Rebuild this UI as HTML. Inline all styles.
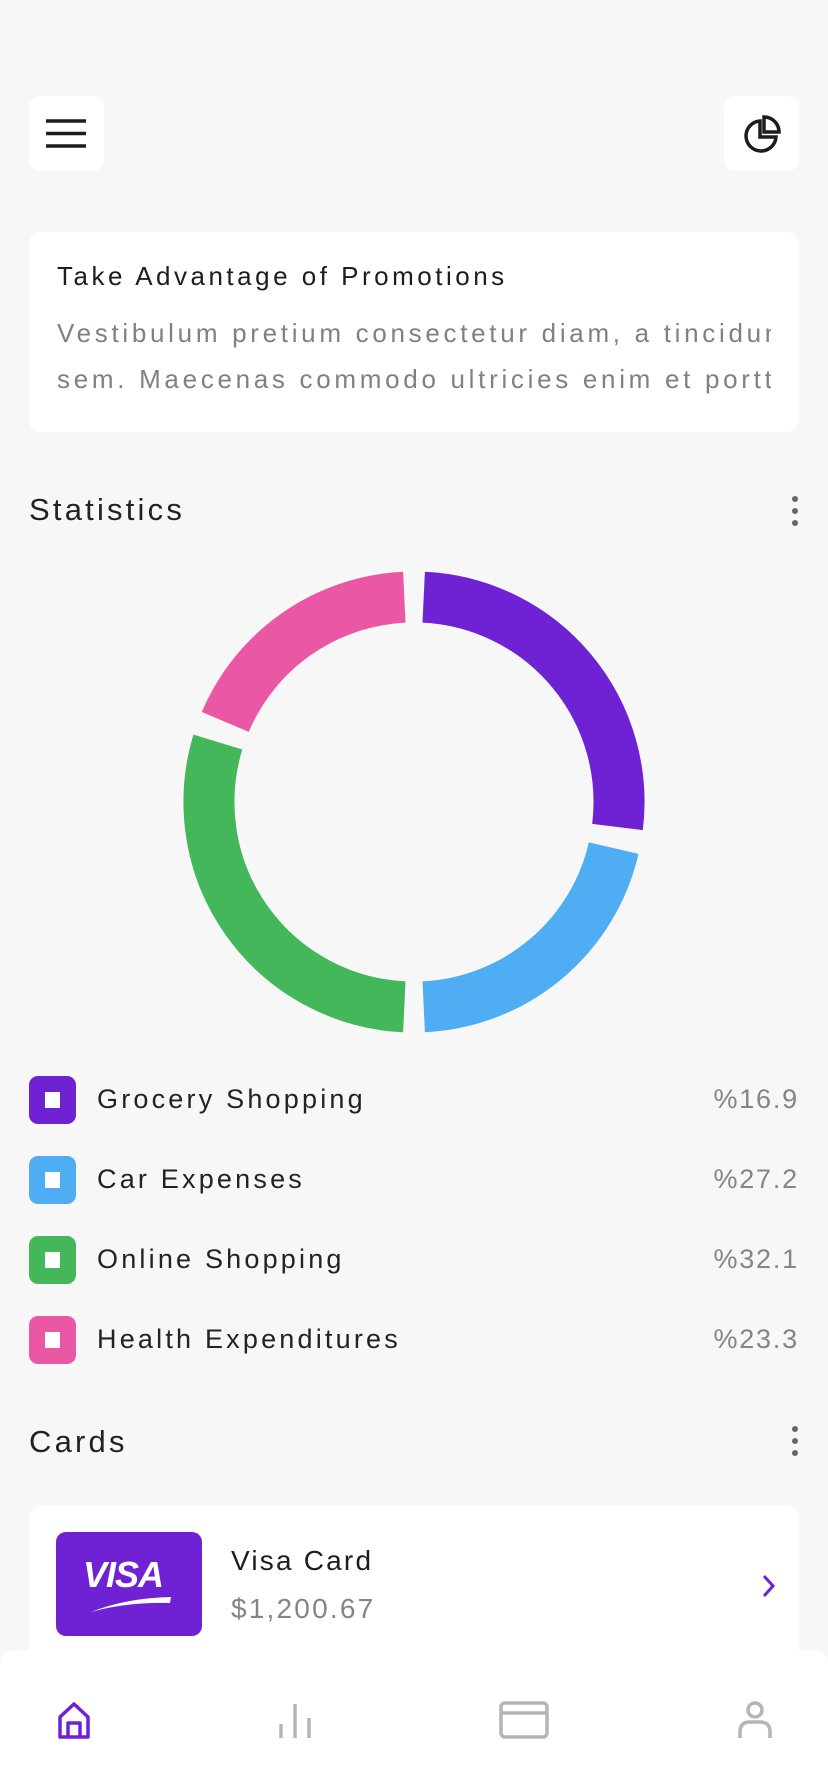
<!DOCTYPE html>
<html><head><meta charset="utf-8"><style>
*{margin:0;padding:0;box-sizing:border-box}
body{width:828px;height:1792px;background:#f7f7f8;font-family:"Liberation Sans",sans-serif;position:relative;overflow:hidden;color:#1f1f22}
.btn{position:absolute;top:96px;width:75px;height:75px;background:#fff;border-radius:11px}
.card{position:absolute;left:29px;width:770px;background:#fff;border-radius:12px}
.h{position:absolute;left:29px;font-size:31px;letter-spacing:3.2px;color:#222}
.dots{position:absolute;left:792px;width:7px}
.dots i{display:block;width:6px;height:6px;border-radius:3px;background:#666;margin-bottom:6px}
.row{position:absolute;left:29px;width:770px;height:48px}
.sq{position:absolute;left:0;top:0;width:47px;height:48px;border-radius:9px}
.sq:after{content:"";position:absolute;left:16px;top:16px;width:15px;height:16px;background:#fff}
.lbl{position:absolute;left:68px;top:8px;font-size:27px;letter-spacing:3.2px;color:#222}
.pct{position:absolute;right:0;top:8px;font-size:27px;letter-spacing:1.8px;color:#858589}
</style></head><body>
<div class="btn" style="left:29px"><svg width="75" height="75"><g stroke="#1d1d1f" stroke-width="3.5"><line x1="17" y1="25" x2="57" y2="25"/><line x1="17" y1="37.5" x2="57" y2="37.5"/><line x1="17" y1="50" x2="57" y2="50"/></g></svg></div>
<div class="btn" style="left:724px"><svg width="75" height="75"><g fill="none" stroke="#1d1d1f" stroke-width="3.5"><path d="M36 25 A15 15 0 1 0 52 41 H36 Z"/><path d="M40 21 A15 15 0 0 1 55 36 H40 Z"/></g></svg></div>
<div class="card" style="top:232px;height:200px;overflow:hidden">
<div style="position:absolute;left:28px;top:29px;font-size:26px;letter-spacing:3.5px;color:#1d1d1f">Take Advantage of Promotions</div>
<div style="position:absolute;left:28px;right:28px;top:78px;font-size:26px;letter-spacing:3.7px;color:#7d8086;line-height:46px;white-space:nowrap;overflow:hidden">Vestibulum pretium consectetur diam, a tincidunt<br>sem. Maecenas commodo ultricies enim et porttitor</div>
</div>
<div class="h" style="top:492px">Statistics</div>
<div class="dots" style="top:496px"><i></i><i></i><i></i></div>
<svg style="position:absolute;left:0;top:0" width="828" height="1100"><g fill="none" stroke-width="51">
<path stroke="#6f22d3" d="M423.7 597.2 A205 205 0 0 1 617.5 827"/>
<path stroke="#4faef3" d="M613.7 848.1 A205 205 0 0 1 423.7 1006.8"/>
<path stroke="#43b75a" d="M404.3 1006.8 A205 205 0 0 1 217.9 742.1"/>
<path stroke="#ea57a4" d="M225.3 721.9 A205 205 0 0 1 404.3 597.2"/>
</g></svg>
<div class="row" style="top:1076px"><div class="sq" style="background:#6f22d3"></div><div class="lbl">Grocery Shopping</div><div class="pct">%16.9</div></div>
<div class="row" style="top:1156px"><div class="sq" style="background:#4faef3"></div><div class="lbl">Car Expenses</div><div class="pct">%27.2</div></div>
<div class="row" style="top:1236px"><div class="sq" style="background:#43b75a"></div><div class="lbl">Online Shopping</div><div class="pct">%32.1</div></div>
<div class="row" style="top:1316px"><div class="sq" style="background:#ea57a4"></div><div class="lbl">Health Expenditures</div><div class="pct">%23.3</div></div>
<div class="h" style="top:1424px">Cards</div>
<div class="dots" style="top:1426px"><i></i><i></i><i></i></div>
<div class="card" style="top:1505px;height:200px">
<div style="position:absolute;left:27px;top:27px;width:146px;height:104px;background:#6f22d3;border-radius:10px">
<div style="position:absolute;left:27px;top:22px;color:#fff;font-weight:bold;font-style:italic;font-size:36px;letter-spacing:-1px">VISA</div>
<svg style="position:absolute;left:30px;top:60px" width="90" height="25"><path d="M5 20 Q40 6 85 5 L84 11 Q40 10 5 20Z" fill="#fff"/></svg></div>
<div style="position:absolute;left:202px;top:40px;font-size:28px;letter-spacing:2.2px;color:#1d1d1f">Visa Card</div>
<div style="position:absolute;left:202px;top:88px;font-size:28px;letter-spacing:2.2px;color:#858589">$1,200.67</div>
<svg style="position:absolute;left:725px;top:65px" width="30" height="32"><path d="M10 6 L19 16 L10 26" fill="none" stroke="#6f22d3" stroke-width="3"/></svg>
</div>
<div style="position:absolute;left:0;top:1650px;width:828px;height:142px;background:#fff;border-radius:14px 14px 0 0">
<svg style="position:absolute;left:56px;top:50px" width="36" height="40"><path d="M4 37 V17 L18 4 L32 17 V37 Z M12 37 V23 H24 V37" fill="none" stroke="#6f22d3" stroke-width="3.5" stroke-linejoin="round"/></svg>
<svg style="position:absolute;left:277px;top:50px" width="36" height="40"><g stroke="#b5b5b8" stroke-width="3.5"><line x1="4" y1="38" x2="4" y2="24"/><line x1="18" y1="38" x2="18" y2="4"/><line x1="32" y1="38" x2="32" y2="18"/></g></svg>
<svg style="position:absolute;left:498px;top:50px" width="52" height="40"><rect x="3" y="3" width="46" height="34" rx="4" fill="none" stroke="#b5b5b8" stroke-width="3.5"/><line x1="3" y1="13" x2="49" y2="13" stroke="#b5b5b8" stroke-width="3.5"/></svg>
<svg style="position:absolute;left:737px;top:50px" width="36" height="40"><g fill="none" stroke="#b5b5b8" stroke-width="3.5"><circle cx="18" cy="10" r="7"/><path d="M3 38 V32 Q3 22 13 22 H23 Q33 22 33 32 V38"/></g></svg>
</div>
</body></html>
